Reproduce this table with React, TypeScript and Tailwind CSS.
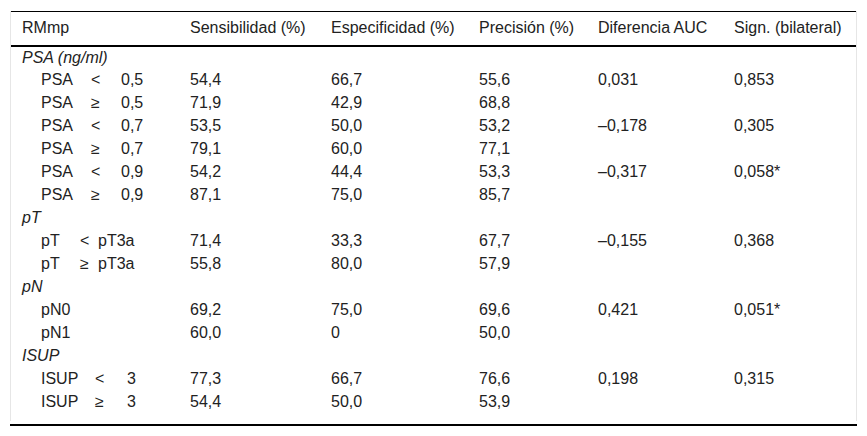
import React from "react";

type Row =
  | { kind: "group"; label: string }
  | {
      kind: "data";
      parts: string[];
      grid: string;
      v: string[];
    };

const psaGrid = "grid-cols-[50px_30px_auto]";
const ptGrid = "grid-cols-[39px_18px_auto]";
const isupGrid = "grid-cols-[54px_32px_auto]";
const oneGrid = "grid-cols-[auto]";

const rows: Row[] = [
  { kind: "group", label: "PSA (ng/ml)" },
  { kind: "data", parts: ["PSA", "<", "0,5"], grid: psaGrid, v: ["54,4", "66,7", "55,6", "0,031", "0,853"] },
  { kind: "data", parts: ["PSA", "≥", "0,5"], grid: psaGrid, v: ["71,9", "42,9", "68,8", "", ""] },
  { kind: "data", parts: ["PSA", "<", "0,7"], grid: psaGrid, v: ["53,5", "50,0", "53,2", "–0,178", "0,305"] },
  { kind: "data", parts: ["PSA", "≥", "0,7"], grid: psaGrid, v: ["79,1", "60,0", "77,1", "", ""] },
  { kind: "data", parts: ["PSA", "<", "0,9"], grid: psaGrid, v: ["54,2", "44,4", "53,3", "–0,317", "0,058*"] },
  { kind: "data", parts: ["PSA", "≥", "0,9"], grid: psaGrid, v: ["87,1", "75,0", "85,7", "", ""] },
  { kind: "group", label: "pT" },
  { kind: "data", parts: ["pT", "<", "pT3a"], grid: ptGrid, v: ["71,4", "33,3", "67,7", "–0,155", "0,368"] },
  { kind: "data", parts: ["pT", "≥", "pT3a"], grid: ptGrid, v: ["55,8", "80,0", "57,9", "", ""] },
  { kind: "group", label: "pN" },
  { kind: "data", parts: ["pN0"], grid: oneGrid, v: ["69,2", "75,0", "69,6", "0,421", "0,051*"] },
  { kind: "data", parts: ["pN1"], grid: oneGrid, v: ["60,0", "0", "50,0", "", ""] },
  { kind: "group", label: "ISUP" },
  { kind: "data", parts: ["ISUP", "<", "3"], grid: isupGrid, v: ["77,3", "66,7", "76,6", "0,198", "0,315"] },
  { kind: "data", parts: ["ISUP", "≥", "3"], grid: isupGrid, v: ["54,4", "50,0", "53,9", "", ""] },
];

const headers = [
  "RMmp",
  "Sensibilidad (%)",
  "Especificidad (%)",
  "Precisión (%)",
  "Diferencia AUC",
  "Sign. (bilateral)",
];

export default function App() {
  return (
    <div
      className="w-[867px] h-[436px] bg-white pt-[11px] pl-[10px] text-[#222] text-[16px]"
      style={{ fontFamily: '"Liberation Sans", Arial, sans-serif' }}
    >
      <div className="w-[847px] border-x border-[#e6e6e6] pb-[7px]">
        <table className="table-fixed border-collapse w-[845px]">
          <colgroup>
            <col className="w-[167px]" />
            <col className="w-[141px]" />
            <col className="w-[148px]" />
            <col className="w-[119px]" />
            <col className="w-[136px]" />
            <col className="w-[134px]" />
          </colgroup>
          <thead>
            <tr className="border-t border-black border-b-2 h-[34px]">
              {headers.map((h, i) => (
                <th
                  key={h}
                  className={`font-normal text-left whitespace-nowrap leading-[20px] ${i === 0 ? "pl-[11px]" : "pl-[12px]"}`}
                >
                  {h}
                </th>
              ))}
            </tr>
          </thead>
          <tbody>
            {rows.map((r, idx) =>
              r.kind === "group" ? (
                <tr key={idx} className="h-[23px]">
                  <td className="pl-[11px] italic leading-[20px] whitespace-nowrap" colSpan={6}>
                    {r.label}
                  </td>
                </tr>
              ) : (
                <tr key={idx} className="h-[23px]">
                  <td className="pl-[30px] leading-[20px] whitespace-nowrap">
                    <div className={`grid ${r.grid}`}>
                      {r.parts.map((p, j) => (
                        <span key={j}>{p}</span>
                      ))}
                    </div>
                  </td>
                  <td className="pl-[12px] leading-[20px]">{r.v[0]}</td>
                  <td className="pl-[12px] leading-[20px]">{r.v[1]}</td>
                  <td className="pl-[12px] leading-[20px]">{r.v[2]}</td>
                  <td className="pl-[12px] leading-[20px]">{r.v[3]}</td>
                  <td className="pl-[12px] leading-[20px]">{r.v[4]}</td>
                </tr>
              )
            )}
          </tbody>
        </table>
      </div>
      <div className="w-[847px] h-[2px] bg-black mt-[3px]" />
    </div>
  );
}
